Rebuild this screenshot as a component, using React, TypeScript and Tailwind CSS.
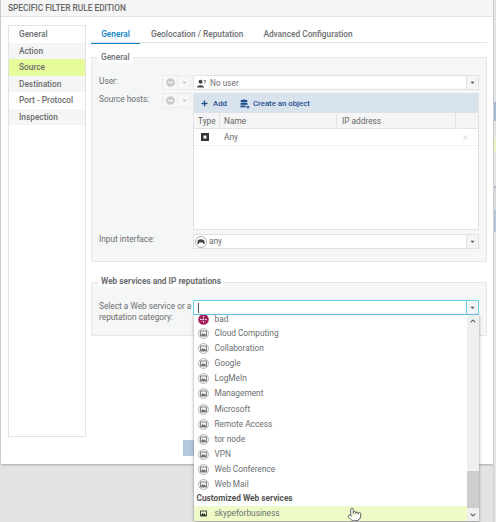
import { FaMinusCircle, FaCaretDown, FaPlus, FaChevronUp, FaChevronDown, FaTimes } from 'react-icons/fa';
import { Pointer } from 'lucide-react';

const sections = ['General', 'Action', 'Source', 'Destination', 'Port - Protocol', 'Inspection'];
const categories = ['Cloud Computing', 'Collaboration', 'Google', 'LogMeIn', 'Management', 'Microsoft', 'Remote Access', 'tor node', 'VPN', 'Web Conference', 'Web Mail'];

function ServiceIcon({ dark }: { dark?: boolean }) {
  return (
    <svg width="11" height="11" viewBox="0 0 11 11" className="shrink-0">
      {!dark && <circle cx="5.5" cy="5.5" r="5" fill="#f4f4f4" stroke="#a8a8a8" strokeWidth="0.8" />}
      <rect x="2.6" y="3" width="5.8" height="5" fill="none" stroke={dark ? '#222' : '#666'} strokeWidth="0.8" />
      <path d="M2.8 7.8 L4.6 5 L5.9 6.3 L6.8 5.4 L8.2 7.8 Z" fill={dark ? '#222' : '#666'} />
    </svg>
  );
}

function SideButtons() {
  return (
    <div className="flex w-[29px] h-[15px] shrink-0 border border-[#ececec] bg-[#f7f7f7]">
      <div className="w-[15px] flex items-center justify-center border-r border-[#ececec]">
        <FaMinusCircle className="text-[#c9c9c9] text-[9px]" />
      </div>
      <div className="flex-1 flex items-center justify-center">
        <FaCaretDown className="text-[#c4c4c4] text-[7px]" />
      </div>
    </div>
  );
}

function ComboArrow({ focus }: { focus?: boolean }) {
  return (
    <div className={`w-[12px] shrink-0 flex items-center justify-center bg-[#f5f5f5] border-l ${focus ? 'border-[#6ccbee]' : 'border-[#e2e2e2]'}`}>
      <FaCaretDown className="text-[#555] text-[7px]" />
    </div>
  );
}

export default function App() {
  return (
    <div className="relative w-[496px] h-[522px] overflow-hidden bg-[#e3e3e3] text-[#6b6e70] text-[8.3px] leading-[11px]" style={{ fontFamily: 'Roboto, sans-serif' }}>
      <div className="flex h-full">
        <div className="w-px shrink-0 bg-[#dcdcdc] h-[464px]" />
        <div className="w-[492px] h-[464px] bg-white shadow-[0_1px_2px_rgba(0,0,0,0.25)] flex flex-col">
          <div className="h-[17px] shrink-0 bg-[#f5f5f5] border-b border-[#e2e2e2] px-[7px] pt-[1px] flex items-center font-medium text-[#666]">
            SPECIFIC FILTER RULE EDITION
          </div>

          <div className="flex flex-1 pl-[7px] pt-[8px] pr-[6px]">
            <div className="w-[78px] h-[412px] shrink-0 border border-[#e2e2e2] font-medium">
              {sections.map((s, i) => (
                <div
                  key={s}
                  className={`h-[16.5px] pl-[10px] pt-[1px] flex items-center ${s === 'Source' ? 'bg-[#e6fb99]' : i % 2 ? 'bg-[#f5f5f5]' : 'bg-white'}`}
                >
                  {s}
                </div>
              ))}
            </div>

            <div className="flex-1 ml-[5px] min-w-0">
              <div className="flex h-[18px] border-b-[1.5px] border-[#e2e2e2] font-medium">
                <div className="w-[49px] -mb-[1.5px] border-b-[1.5px] border-[#0a83c6] text-[#0a83c6] flex items-center justify-center pt-[1px]">General</div>
                <div className="ml-[11px] flex items-center pt-[1px]">Geolocation / Reputation</div>
                <div className="ml-[20px] flex items-center pt-[1px]">Advanced Configuration</div>
              </div>

              <div className="mt-[14px] relative h-[205px] border border-[#e6e6e6] rounded-[1px] bg-[#f5f6f6] px-[7px] pt-[17px]">
                <div className="absolute -top-[6px] left-[6px] px-[3px] bg-white font-medium">General</div>

                <div className="flex items-start h-[18px]">
                  <div className="w-[63px] shrink-0 pt-[1px]">User:</div>
                  <SideButtons />
                  <div className="ml-[2px] flex-1 h-[15px] flex border border-[#e2e2e2] bg-white">
                    <div className="flex-1 flex items-center pl-[3px] pt-[1px] gap-[3px]">
                      <svg width="10" height="9" viewBox="0 0 10 9">
                        <circle cx="3.5" cy="2.8" r="2" fill="#444" />
                        <path d="M0 8.5 C0 5.5 7 5.5 7 8.5 Z" fill="#444" />
                        <text x="6.5" y="4.5" fontSize="5" fontWeight="700" fill="#444">?</text>
                      </svg>
                      No user
                    </div>
                    <ComboArrow />
                  </div>
                </div>

                <div className="flex items-start">
                  <div className="w-[63px] shrink-0 pt-[1px]">Source hosts:</div>
                  <SideButtons />
                  <div className="ml-[2px] flex-1 h-[137px] border border-[#e2e2e2] bg-white flex flex-col">
                    <div className="h-[19px] shrink-0 bg-[#d9e3ee] flex items-center pl-[7px] text-[7.8px] font-medium text-[#1f4e8c]">
                      <FaPlus className="text-[7px] mr-[5px]" />
                      Add
                      <svg width="10" height="10" viewBox="0 0 10 10" className="ml-[13px] mr-[3px]">
                        <ellipse cx="4" cy="2" rx="3.5" ry="1.5" fill="#1f4e8c" />
                        <rect x="0.5" y="4" width="7" height="1.8" fill="#1f4e8c" />
                        <rect x="0.5" y="6.5" width="5" height="1.8" fill="#1f4e8c" />
                        <path d="M6 8 H9.5 M8 6.5 V9.5" stroke="#1f4e8c" strokeWidth="1" />
                      </svg>
                      Create an object
                    </div>
                    <div className="h-[16px] shrink-0 flex items-center bg-[#f5f5f5] border-b border-[#e4e4e4] text-[#666]">
                      <div className="w-[26px] pl-[4px] pt-[1px] border-r border-[#e4e4e4] h-full flex items-center">Type</div>
                      <div className="w-[117px] pl-[4px] pt-[1px] border-r border-[#e4e4e4] h-full flex items-center">Name</div>
                      <div className="w-[119px] pl-[5px] pt-[1px] border-r border-[#e4e4e4] h-full flex items-center">IP address</div>
                    </div>
                    <div className="h-[17px] shrink-0 flex items-center border-b border-[#f2f2f2]">
                      <div className="w-[26px] pl-[7px] flex items-center">
                        <svg width="8" height="8" viewBox="0 0 8 8">
                          <rect width="8" height="8" fill="#333" />
                          <rect x="2.5" y="2.5" width="3" height="3" fill="#fff" />
                        </svg>
                      </div>
                      <div className="flex-1 pl-[4px]">Any</div>
                      <FaTimes className="text-[#e4e4e4] text-[7px] mr-[9px]" />
                    </div>
                  </div>
                </div>

                <div className="flex items-start mt-[4px]">
                  <div className="w-[94px] shrink-0">Input interface:</div>
                  <div className="flex-1 h-[15px] flex border border-[#e2e2e2] bg-white">
                    <div className="flex-1 flex items-center pl-[1px] gap-[2px]">
                      <svg width="12" height="12" viewBox="0 0 12 12">
                        <circle cx="6" cy="6" r="5.5" fill="#fff" stroke="#999" strokeWidth="0.8" />
                        <path d="M2.5 8 V5.5 C2.5 2.5 9.5 2.5 9.5 5.5 V8 H8 V6.5 H4 V8 Z" fill="#444" />
                      </svg>
                      any
                    </div>
                    <ComboArrow />
                  </div>
                </div>
              </div>

              <div className="mt-[20px] relative h-[54px] border border-[#e6e6e6] rounded-[1px] bg-[#f5f6f6] px-[7px] pt-[17px] flex items-start">
                <div className="absolute -top-[7px] left-[6px] px-[3px] bg-white font-bold">Web services and IP reputations</div>
                <div className="w-[94px] shrink-0 pt-[1px]">Select a Web service or a reputation category:</div>
                <div className="flex-1 h-[15px] flex border border-[#6ccbee] bg-white">
                  <div className="flex-1 flex items-center pl-[4px]">
                    <div className="w-px h-[10px] bg-[#555]" />
                  </div>
                  <ComboArrow focus />
                </div>
              </div>
            </div>
          </div>
        </div>
        <div className="flex-1 h-full flex flex-col border-l border-[#cfcfcf]">
          <div className="h-[102px] bg-[#e0e2e4]" />
          <div className="h-[19px] bg-[#a3b8d1]" />
          <div className="h-[17px] bg-[#e0e2e4]" />
          <div className="h-[15px] bg-[#eef0c4]" />
          <div className="h-[33px] bg-[#e4e4e4]" />
          <div className="h-[2px] bg-[#a3b8d1]" />
          <div className="h-[22px] bg-[#d8d8d8]" />
          <div className="h-[22px] bg-[#b5c5dc]" />
          <div className="flex-1 bg-[#e4e4e4]" />
        </div>
      </div>

      {/* save button, mostly hidden behind the open list */}
      <div className="absolute left-[183px] top-[440px] w-[20px] h-[16px] bg-[#b3c9e0]" />

      {/* open combo list */}
      <div className="absolute left-[193.5px] top-[315px] w-[285px] h-[206px] bg-white shadow-[0_1px_3px_rgba(0,0,0,0.4)] flex overflow-hidden">
        <div className="flex-1 min-w-0 relative">
          <div className="h-[8px] pl-[4px] flex items-center gap-[6px]">
            <svg width="11" height="11" viewBox="0 0 11 11" className="shrink-0">
              <circle cx="5.5" cy="5.5" r="5.3" fill="#a5245f" />
              <path d="M2 5.5 H9 M5.5 2 V9" stroke="#fff" strokeWidth="1" strokeDasharray="1.5 1" />
            </svg>
            bad
          </div>
          <div className="pt-[3px]">
            {categories.map((c) => (
              <div key={c} className="h-[15.1px] flex items-center pl-[4px] gap-[6px]">
                <ServiceIcon />
                {c}
              </div>
            ))}
          </div>
          <div className="h-[13.5px] flex items-center pl-[3px] font-bold text-[#555]">Customized Web services</div>
          <div className="relative h-[15px] flex items-center pl-[4px] gap-[6px] bg-[#eefbc9]">
            <ServiceIcon dark />
            skypeforbusiness
            <Pointer size={15} strokeWidth={1.3} fill="#fff" className="absolute left-[153px] top-[1px] text-[#444]" />
          </div>
        </div>
        <div className="w-[12px] shrink-0 bg-[#efefef] flex flex-col items-center">
          <div className="h-[11px] flex items-center"><FaChevronUp className="text-[#555] text-[6px]" /></div>
          <div className="flex-1" />
          <div className="w-full h-[37px] bg-[#cdcdcd]" />
          <div className="h-[13px] flex items-center"><FaChevronDown className="text-[#555] text-[6px]" /></div>
        </div>
      </div>
    </div>
  );
}
